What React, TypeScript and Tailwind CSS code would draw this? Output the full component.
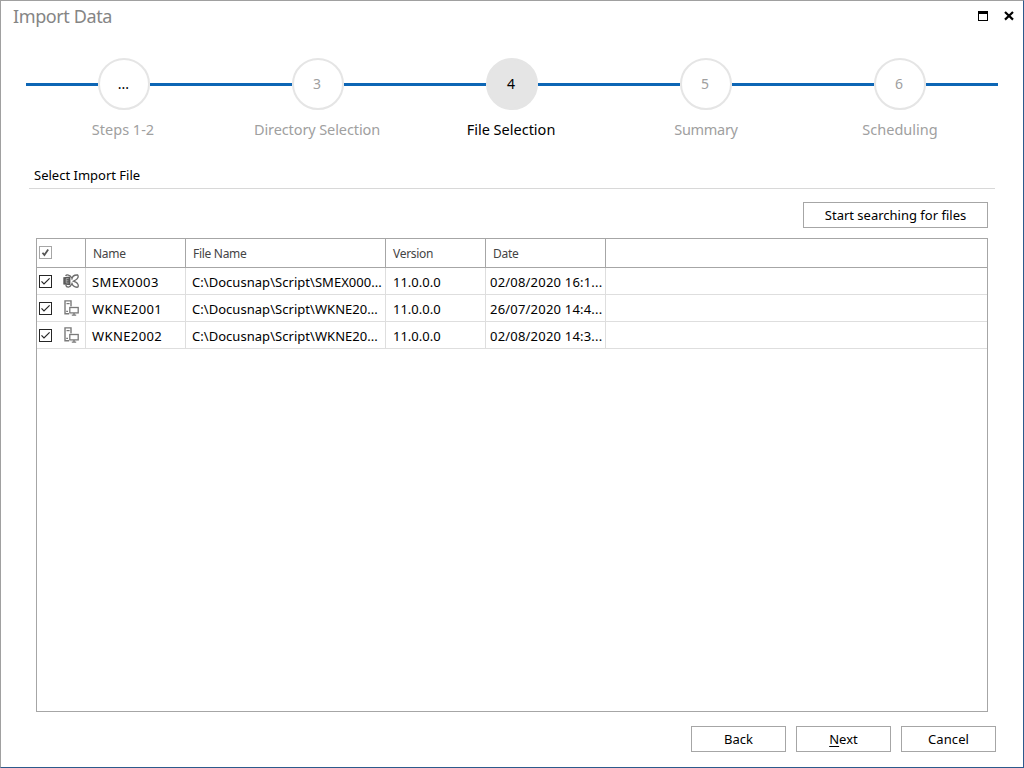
import { clsx } from 'clsx'

type RowKind = 'exchange' | 'workstation'

const steps = [
  { mark: '...', label: 'Steps 1-2', tracking: 'tracking-normal' },
  { mark: '3', label: 'Directory Selection', tracking: 'tracking-[-0.1px]' },
  { mark: '4', label: 'File Selection', tracking: 'tracking-normal' },
  { mark: '5', label: 'Summary', tracking: 'tracking-[-0.3px]' },
  { mark: '6', label: 'Scheduling', tracking: 'tracking-normal' },
]

const activeStep = 2

const rows: { kind: RowKind; name: string; file: string; version: string; date: string }[] = [
  { kind: 'exchange', name: 'SMEX0003', file: 'C:\\Docusnap\\Script\\SMEX000...', version: '11.0.0.0', date: '02/08/2020 16:1...' },
  { kind: 'workstation', name: 'WKNE2001', file: 'C:\\Docusnap\\Script\\WKNE20...', version: '11.0.0.0', date: '26/07/2020 14:4...' },
  { kind: 'workstation', name: 'WKNE2002', file: 'C:\\Docusnap\\Script\\WKNE20...', version: '11.0.0.0', date: '02/08/2020 14:3...' },
]

function Checkbox({ muted = false }: { muted?: boolean }) {
  return (
    <svg className={clsx('h-[13px] w-[13px] shrink-0', muted ? 'text-[#a6a6a6]' : 'text-[#262626]')} viewBox="0 0 13 13" fill="none">
      <rect x="0.5" y="0.5" width="12" height="12" stroke="currentColor" />
      {muted ? (
        <path d="M3.5 6.7 L5.4 9 L9.2 3.6" stroke="#555" strokeWidth="1.8" />
      ) : (
        <path d="M2.5 6.3 L5 8.9 L10.6 3.4" stroke="#262626" strokeWidth="1.2" />
      )}
    </svg>
  )
}

function RowIcon({ kind }: { kind: RowKind }) {
  if (kind === 'exchange') {
    return (
      <svg className="h-4 w-4 shrink-0" viewBox="0 0 16 16" fill="none" stroke="#6b6b6b" strokeWidth="1.3">
        <path d="M2.6 3 C3.4 1.4 7 1.4 8.8 5" />
        <path d="M2.8 12 C3.4 14.8 7 15 8.8 11" />
        <path d="M8.8 6.6 C9 3.8 11 1.8 14.6 2 C15.8 3.4 15 5.8 12.6 7 L10.4 8.1 L12.8 9.2 C15.2 10.4 15.8 12.8 14.8 14.2 C11.4 14.6 9 12.4 8.8 9.6" />
        <path d="M0.3 4.2 L7.4 3.4 V12.2 L0.3 11.4 Z" fill="#595959" stroke="none" />
        <path d="M5.6 5.6 H3.2 V10 H5.6 M3.2 7.8 H5.4" stroke="#b4b4b4" strokeWidth="0.8" />
      </svg>
    )
  }
  return (
    <svg className="h-4 w-4 shrink-0" viewBox="0 0 16 16" fill="none" stroke="#7a7a7a">
      <path d="M2 0.9 H8 V13.8 H2 Z" fill="#fff" strokeWidth="1.4" />
      <path d="M3.5 3.6 H6.6" strokeWidth="1.2" />
      <path d="M3.2 11.4 H5" strokeWidth="1.3" />
      <rect x="6" y="6.4" width="10" height="8.4" fill="#fff" stroke="none" />
      <rect x="6.8" y="7.5" width="8.4" height="5.4" strokeWidth="1.3" fill="#fff" />
      <path d="M11 13 V14.8 M8.8 15.1 H13.2" strokeWidth="1.4" />
    </svg>
  )
}

function DialogButton({ children, className }: { children: React.ReactNode; className?: string }) {
  return (
    <button className={clsx('flex h-[26px] items-center justify-center border border-[#a6a6a6] bg-white pt-0.5 text-[13px] text-black', className)}>
      {children}
    </button>
  )
}

function Stepper() {
  return (
    <div className="mt-[25px] flex px-[26px]">
      {steps.map((step, i) => {
        const active = i === activeStep
        return (
          <div key={step.label} className="flex w-[194px] flex-col items-center">
            <div className="flex">
              <div className={clsx('mt-[25px] h-[3px] bg-[#0d66b5]', i === 0 ? '-ml-px w-[72px]' : 'w-[71px]')} />
              <div
                className={clsx(
                  'flex h-[52px] w-[52px] shrink-0 items-center justify-center rounded-full border-2 border-[#e5e5e5] pb-0.5 text-[14px]',
                  i === 0 ? 'pr-px' : 'pr-0.5',
                  active ? 'bg-[#e5e5e5]' : 'bg-white',
                  active || i === 0 ? 'text-black' : 'text-[#a0a0a0]',
                )}
              >
                {step.mark}
              </div>
              <div className={clsx('mt-[25px] h-[3px] bg-[#0d66b5]', i === steps.length - 1 ? '-mr-px w-[72px]' : 'w-[71px]')} />
            </div>
            <span
              className={clsx(
                'mt-2 mb-px whitespace-nowrap text-[14.5px] leading-[22px]',
                i < 3 ? 'pr-0.5' : 'pr-0',
                step.tracking,
                active ? 'text-black' : 'text-[#a0a0a0]',
              )}
            >
              {step.label}
            </span>
          </div>
        )
      })}
    </div>
  )
}

function FileTable() {
  return (
    <div className="mx-[35px] mt-2.5 h-[474px] overflow-hidden border border-[#a6a6a6]">
      <div className="flex h-[29px] border-b border-[#a6a6a6] text-[12px] leading-[29px] tracking-[-0.3px] text-[#444]">
        <div className="flex w-[49px] border-r border-[#a6a6a6] pl-0.5 pt-[7px]">
          <Checkbox muted />
        </div>
        <div className="w-[100px] border-r border-[#a6a6a6] pl-[7px]">Name</div>
        <div className="w-[200px] border-r border-[#a6a6a6] pl-[7px]">File Name</div>
        <div className="w-[100px] border-r border-[#a6a6a6] pl-[7px]">Version</div>
        <div className="w-[120px] border-r border-[#a6a6a6] pl-[7px]">Date</div>
      </div>
      {rows.map((row) => (
        <div key={row.name} className="flex h-[27px] whitespace-nowrap border-b border-[#dedede] text-[13px] leading-[28px] text-black">
          <div className="flex w-[49px] border-r border-[#dedede] pl-0.5">
            <div className="pt-[7px]">
              <Checkbox />
            </div>
            <div className="pl-[11px] pt-[5px]">
              <RowIcon kind={row.kind} />
            </div>
          </div>
          <div className="w-[100px] border-r border-[#dedede] pl-[6px] tracking-[0.4px]">{row.name}</div>
          <div className="w-[200px] border-r border-[#dedede] pl-[6px] tracking-[0.04px]">{row.file}</div>
          <div className="w-[100px] border-r border-[#dedede] pl-[7px]">{row.version}</div>
          <div className="w-[120px] border-r border-[#dedede] pl-1 tracking-[0.2px]">{row.date}</div>
        </div>
      ))}
    </div>
  )
}

export default function App() {
  return (
    <div className="flex h-[768px] w-[1024px] flex-col border border-b-[#2d5a8c] border-l-[#a0a0a0] border-r-[#2d5a8c] border-t-[#a0a0a0] bg-white font-['Noto_Sans',sans-serif]">
      <header className="flex h-8 justify-between pl-3 pr-[9px]">
        <h1 className="text-[18px] leading-[31px] tracking-[-0.4px] text-[#858585]">Import Data</h1>
        <div className="flex gap-4 pt-2.5">
          <div className="h-2.5 w-2.5 border border-t-[3px] border-black" />
          <svg className="h-2.5 w-2.5" viewBox="0 0 10 10" stroke="#000" strokeWidth="2.2">
            <path d="M1 1 L9 8.6 M9 1 L1 8.6" />
          </svg>
        </div>
      </header>

      <Stepper />

      <div className="ml-7 mr-7 mt-[23px] h-[25px] border-b border-[#d8d8d8] pl-[5px] text-[13px] leading-[22px] text-black">
        Select Import File
      </div>

      <div className="mt-[13px] flex justify-end pr-[35px]">
        <DialogButton className="w-[185px]">Start searching for files</DialogButton>
      </div>

      <FileTable />

      <footer className="mt-3.5 flex justify-end gap-2.5 pr-[27px]">
        <DialogButton className="w-[95px]">Back</DialogButton>
        <DialogButton className="w-[95px]">
          <span className="underline underline-offset-2">N</span>ext
        </DialogButton>
        <DialogButton className="w-[95px] tracking-[0.1px]">Cancel</DialogButton>
      </footer>
    </div>
  )
}
